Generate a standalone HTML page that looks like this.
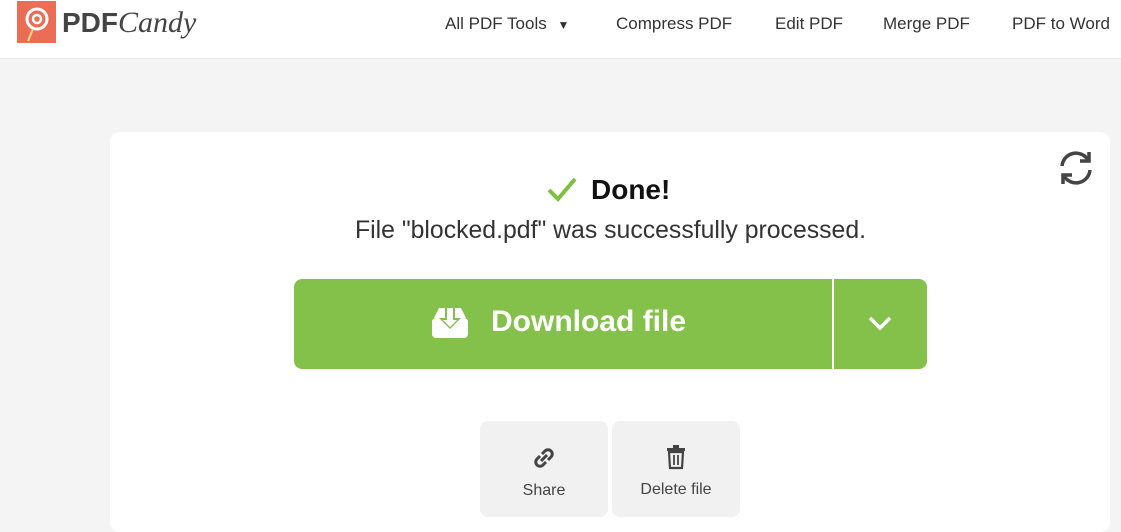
<!DOCTYPE html>
<html><head><style>
body{margin:0;width:1121px;height:520px;background:#f4f4f4;font-family:"Liberation Sans","DejaVu Sans",sans-serif;overflow:hidden;position:relative}
.hdr{position:absolute;left:0;top:0;width:1121px;height:58px;background:#fff;border-bottom:1px solid #ececec}
.nav{position:absolute;top:14px;font-size:17px;color:#333}
.card{position:absolute;left:110px;top:132px;width:1000px;height:400px;background:#fff;border-radius:10px}
.btn{position:absolute;background:#84c14b;color:#fff}
.sm{position:absolute;top:421px;width:128px;height:96px;background:#f1f1f1;border-radius:8px;text-align:center;color:#444;font-size:16px}
</style></head><body>
<div class="hdr">
<div style="position:absolute;left:17px;top:1px;width:39px;height:42px;background:#ec6d55"></div>
<svg style="position:absolute;left:17px;top:1px" width="39" height="42"><circle cx="20" cy="18" r="10" fill="none" stroke="#fff" stroke-width="3"/><circle cx="20" cy="18" r="4" fill="none" stroke="#fff" stroke-width="2.5"/><line x1="16" y1="28" x2="11" y2="40" stroke="#f5d98a" stroke-width="2"/></svg>
<div style="position:absolute;left:62px;top:6px;font-size:28px;font-weight:bold;color:#444">PDF<span style="font-family:'Liberation Serif',serif;font-style:italic;font-weight:normal;font-size:30px">Candy</span></div>
<div class="nav" style="left:445px">All PDF Tools <span style="font-size:12px;margin-left:6px">▼</span></div>
<div class="nav" style="left:616px">Compress PDF</div>
<div class="nav" style="left:775px">Edit PDF</div>
<div class="nav" style="left:883px">Merge PDF</div>
<div class="nav" style="left:1012px">PDF to Word</div>
</div>
<div class="card"></div>
<svg style="position:absolute;left:1056px;top:148px" width="40" height="40" viewBox="0 0 40 40" fill="none" stroke="#444" stroke-width="3.5"><path d="M6 18a14 14 0 0 1 26-6"/><path d="M34 22a14 14 0 0 1-26 6"/><path d="M33 4v9h-9" /><path d="M7 36v-9h9"/></svg>
<svg style="position:absolute;left:546px;top:176px" width="32" height="28"><path d="M3 14l9 9L29 3" fill="none" stroke="#7cc043" stroke-width="4"/></svg>
<div style="position:absolute;left:591px;top:174px;font-size:28px;font-weight:bold;color:#111">Done!</div>
<div style="position:absolute;left:0;width:1221px;top:217px;text-align:center;font-size:24.8px;color:#333">File "blocked.pdf" was successfully processed.</div>
<div class="btn" style="left:294px;top:279px;width:538px;height:90px;border-radius:8px 0 0 8px"></div>
<div class="btn" style="left:834px;top:279px;width:93px;height:90px;border-radius:0 8px 8px 0"></div>
<svg style="position:absolute;left:431px;top:307px" width="38" height="32" viewBox="0 0 38 32"><path d="M3 11L8 1h7v10H3z M35 11L30 1h-7v10h12z" fill="#fff"/><rect x="1" y="11" width="36" height="20" rx="4" fill="#fff"/><path d="M14 0h10v11h6L19 22 8 11h6z" fill="#84c14b"/><path d="M16 1h6v12h4l-7 7-7-7h4z" fill="#fff"/></svg>
<div style="position:absolute;left:491px;top:305px;font-size:30px;font-weight:bold;color:#fff">Download file</div>
<svg style="position:absolute;left:867px;top:313px" width="26" height="20"><path d="M3 5l10 10L23 5" fill="none" stroke="#fff" stroke-width="3.5"/></svg>
<div class="sm" style="left:480px"><svg style="margin-top:24px" width="26" height="26" viewBox="0 0 26 26" fill="none" stroke="#444" stroke-width="3"><path d="M11 9l3-3a4 4 0 0 1 6 6l-3 3"/><path d="M15 17l-3 3a4 4 0 0 1-6-6l3-3"/><path d="M10 16l6-6"/></svg><div style="margin-top:6px">Share</div></div>
<div class="sm" style="left:612px"><svg style="margin-top:23px" width="24" height="26" viewBox="0 0 24 26"><rect x="3" y="4" width="18" height="3" fill="#444"/><rect x="9" y="1" width="6" height="3" fill="#444"/><path d="M5 8h14l-1 16H6z" fill="none" stroke="#444" stroke-width="2.2"/><path d="M10 11v10M14 11v10" stroke="#444" stroke-width="1.8"/></svg><div style="margin-top:6px">Delete file</div></div>
</body></html>
